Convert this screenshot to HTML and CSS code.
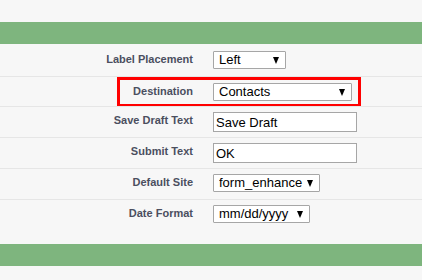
FILE: index.html
```html
<!DOCTYPE html>
<html lang="en">
<head>
  <meta charset="UTF-8" />
  <title>Form Settings</title>
  <link rel="stylesheet" href="styles.css">
</head>
<body>
  <div class="top-space"></div>
  <div class="bar"></div>

  <div class="settings">
    <div class="row first">
      <label class="label">Label Placement</label>
      <span class="select-wrap w-left">
        <select><option>Left</option></select>
      </span>
    </div>
    <div class="row highlighted">
      <label class="label">Destination</label>
      <span class="select-wrap w-dest">
        <select><option>Contacts</option></select>
      </span>
    </div>
    <div class="row">
      <label class="label">Save Draft Text</label>
      <input type="text" class="text-input" value="Save Draft" />
    </div>
    <div class="row">
      <label class="label">Submit Text</label>
      <input type="text" class="text-input" value="OK" />
    </div>
    <div class="row">
      <label class="label">Default Site</label>
      <span class="select-wrap w-site">
        <select><option>form_enhance</option></select>
      </span>
    </div>
    <div class="row last">
      <label class="label">Date Format</label>
      <span class="select-wrap w-date">
        <select><option>mm/dd/yyyy</option></select>
      </span>
    </div>
  </div>

  <div class="bar"></div>
  <div class="bottom-space"></div>
</body>
</html>
```

FILE: styles.css
```css
body {
  margin: 0;
  padding: 0;
  background: #f7f7f7;
  font-family: "Liberation Sans", Arial, sans-serif;
}
.top-space {
  height: 22px;
}
.bar {
  height: 22px;
  background: #7eb57e;
}
.bottom-space {
  height: 14px;
}
.row {
  position: relative;
  display: grid;
  grid-template-columns: 193px auto;
  column-gap: 20px;
  align-items: start;
  box-sizing: border-box;
  height: 31px;
  padding-top: 5px;
  border-top: 1px solid #e6e6e6;
}
.row.first {
  height: 32px;
  padding-top: 7px;
  border-top: none;
}
.row.highlighted {
  height: 30px;
  padding-top: 6px;
}
.row.last {
  height: 45px;
}
.row.highlighted::before {
  content: "";
  position: absolute;
  left: 117px;
  top: 0;
  width: 244px;
  height: 30px;
  box-sizing: border-box;
  border: 3px solid #f00;
}
.label {
  text-align: right;
  font-size: 11px;
  font-weight: bold;
  color: #4b4f5f;
  padding-top: 2px;
  line-height: 13px;
}
.select-wrap {
  position: relative;
  display: inline-block;
  justify-self: start;
}
.select-wrap select {
  appearance: none;
  -webkit-appearance: none;
  display: block;
  width: 100%;
  height: 18px;
  margin: 0;
  padding: 0 0 0 5px;
  border: 1px solid #a6a6a6;
  border-radius: 1px;
  background: #fff;
  font-family: "Liberation Sans", Arial, sans-serif;
  font-size: 13px;
  line-height: 16px;
  color: #000;
}
.select-wrap::after {
  content: "";
  position: absolute;
  right: 7px;
  top: 6px;
  border-left: 3.5px solid transparent;
  border-right: 3.5px solid transparent;
  border-top: 7px solid #000;
  pointer-events: none;
}
.w-left { width: 73px; }
.w-dest { width: 139px; }
.w-site { width: 107px; }
.w-date { width: 97px; }
.text-input {
  justify-self: start;
  box-sizing: border-box;
  width: 144px;
  height: 20px;
  margin: 0;
  padding: 0 2px;
  border: 1px solid #a6a6a6;
  background: #fff;
  font-family: "Liberation Sans", Arial, sans-serif;
  font-size: 13px;
  color: #000;
}
```
